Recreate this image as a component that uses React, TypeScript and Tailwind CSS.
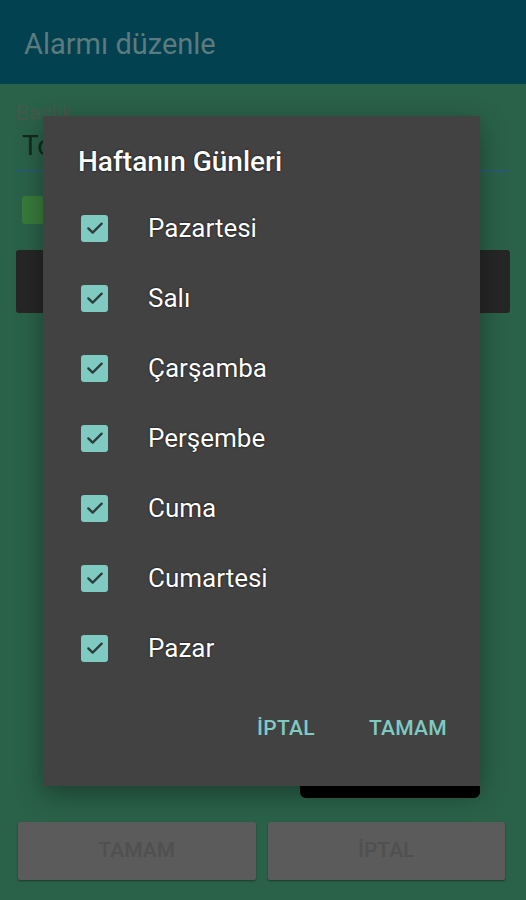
import React from 'react';

const days = ['Pazartesi', 'Salı', 'Çarşamba', 'Perşembe', 'Cuma', 'Cumartesi', 'Pazar'];

const CheckBox = () => (
  <span className="flex h-[27px] w-[27px] items-center justify-center rounded-[3px] bg-[#7fcbc2]">
    <svg width="20" height="20" viewBox="0 0 24 24" fill="none">
      <path d="M4 12.5l5.2 5L20 6.8" stroke="#2e3b3a" strokeWidth="2.8" strokeLinecap="round" strokeLinejoin="round" />
    </svg>
  </span>
);

export default function App() {
  return (
    <div className="relative h-[900px] w-[526px] overflow-hidden bg-[#2a6149] font-['Roboto',sans-serif]">
      {/* underlying screen, dimmed */}
      <div className="flex h-[84px] items-center bg-[#02414f] pl-6 pt-[6px]">
        <span className="text-[29px] text-[#5b7b7f]">Alarmı düzenle</span>
      </div>
      <div className="px-4">
        <div className="pt-[16px] pl-0 text-[21px] leading-[26px] text-[#44594c]">Başlık</div>
        <div className="border-b-2 border-[#2b5b6f] pb-1 pl-[6px] text-[28px] leading-[40px] text-[#13291e]">
          Tost
        </div>
        <div className="mt-[24px] ml-[6px] h-[28px] w-[28px] rounded-[3px] bg-[#387a3b]" />
        <div className="mt-[26px] h-[63px] rounded-[3px] bg-[#262626]" />
        <div className="mt-[388px] ml-[284px] h-[97px] w-[180px] rounded-b-[6px] bg-black" />
        <div className="mt-[24px] flex gap-3 pl-[2px] pr-[5px]">
          <div className="flex h-[58px] flex-1 items-center justify-center rounded-[2px] bg-[#5b5b5b] shadow-[0_1px_2px_rgba(0,0,0,0.4)] text-[21px] font-medium text-[#4f504f]">
            TAMAM
          </div>
          <div className="flex h-[58px] flex-1 items-center justify-center rounded-[2px] bg-[#5b5b5b] shadow-[0_1px_2px_rgba(0,0,0,0.4)] text-[21px] font-medium text-[#4f504f]">
            İPTAL
          </div>
        </div>
      </div>

      {/* dialog */}
      <div className="absolute left-[43px] top-[116px] flex h-[670px] w-[437px] flex-col bg-[#424242] shadow-[0_8px_24px_rgba(0,0,0,0.35)]">
        <div className="pl-[35px] pt-[30px] text-[28px] font-medium leading-[32px] text-white [text-shadow:0_0_2px_#000]">
          Haftanın Günleri
        </div>
        <div className="mt-[15px] flex flex-col">
          {days.map((d) => (
            <div key={d} className="flex h-[70px] items-center pl-[38px]">
              <CheckBox />
              <span className="ml-[40px] text-[26px] text-white [text-shadow:0_0_2px_#000]">{d}</span>
            </div>
          ))}
        </div>
        <div className="mt-[22px] flex h-[48px] items-center justify-end gap-[54px] pr-[33px] text-[21px] font-medium tracking-[0.3px] text-[#7fcbc2]">
          <span>İPTAL</span>
          <span>TAMAM</span>
        </div>
      </div>
    </div>
  );
}
